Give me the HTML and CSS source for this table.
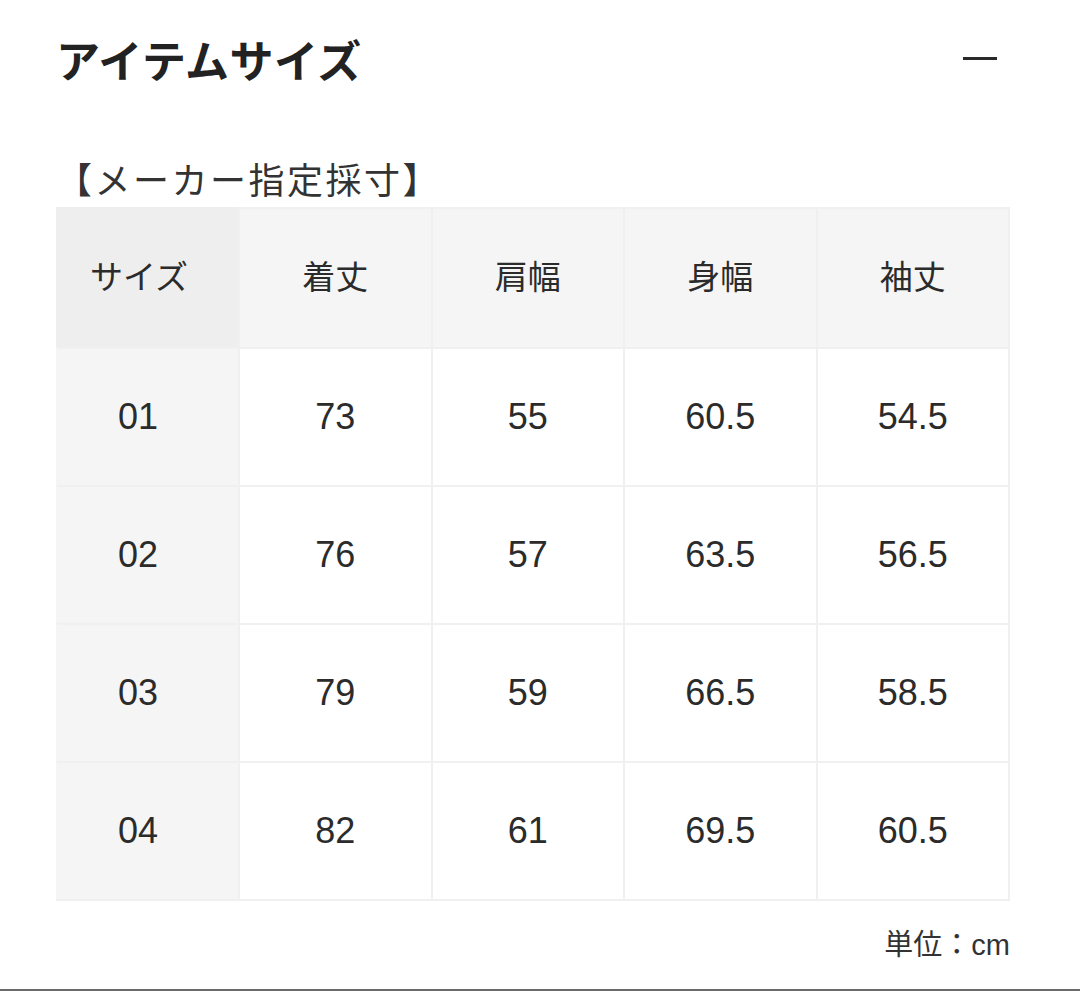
FILE: index.html
```html
<!DOCTYPE html>
<html lang="ja">
<head>
<meta charset="utf-8">
<link rel="stylesheet" href="styles.css">
</head>
<body>
<div class="page">
  <div class="header">
    <h1 class="title">アイテムサイズ</h1>
    <span class="collapse" aria-label="閉じる"></span>
  </div>
  <p class="subtitle">【メーカー指定採寸】</p>
  <div class="size-table">
    <div class="cell corner">サイズ</div>
    <div class="cell head">着丈</div>
    <div class="cell head">肩幅</div>
    <div class="cell head">身幅</div>
    <div class="cell head">袖丈</div>

    <div class="cell side">01</div>
    <div class="cell">73</div>
    <div class="cell">55</div>
    <div class="cell">60.5</div>
    <div class="cell">54.5</div>

    <div class="cell side">02</div>
    <div class="cell">76</div>
    <div class="cell">57</div>
    <div class="cell">63.5</div>
    <div class="cell">56.5</div>

    <div class="cell side">03</div>
    <div class="cell">79</div>
    <div class="cell">59</div>
    <div class="cell">66.5</div>
    <div class="cell">58.5</div>

    <div class="cell side">04</div>
    <div class="cell">82</div>
    <div class="cell">61</div>
    <div class="cell">69.5</div>
    <div class="cell">60.5</div>
  </div>
  <p class="unit">単位：cm</p>
</div>
<div class="rule"></div>
</body>
</html>
```

FILE: styles.css
```css
html, body {
  margin: 0;
  padding: 0;
  background: #ffffff;
}

body {
  font-family: "Liberation Sans", "Noto Sans CJK JP", sans-serif;
  color: #2b2b2b;
  width: 1080px;
  height: 991px;
  overflow: hidden;
  display: flex;
  flex-direction: column;
}

.page {
  flex: 1;
  padding: 32px 70px 0 56px;
}

.header {
  display: flex;
  align-items: center;
  justify-content: space-between;
  height: 54px;
}

.title {
  margin: 0;
  font-family: "Noto Sans CJK JP", sans-serif;
  font-weight: 700;
  font-size: 44px;
  line-height: 54px;
  color: #222222;
  letter-spacing: 0.5px;
}

.collapse {
  display: block;
  width: 34px;
  height: 3px;
  background: #2a2a2a;
  margin-right: 13px;
  margin-top: -2px;
}

.subtitle {
  margin: 72px 0 9px 0;
  font-family: "Noto Sans CJK JP", sans-serif;
  font-weight: 400;
  font-size: 36px;
  line-height: 40px;
  color: #333333;
  letter-spacing: 2.5px;
}

.size-table {
  display: grid;
  grid-template-columns: 182px repeat(4, 1fr);
  grid-template-rows: 140px repeat(4, 138px);
  width: 954px;
  border-right: 2px solid #f0f0f0;
  border-bottom: 2px solid #f0f0f0;
  box-sizing: border-box;
}

.cell {
  display: flex;
  align-items: center;
  justify-content: center;
  font-size: 36px;
  color: #2b2b2b;
  border-left: 2px solid #f0f0f0;
  border-top: 2px solid #f0f0f0;
  background: #ffffff;
}

.corner {
  background: #eeeeee;
  font-family: "Noto Sans CJK JP", sans-serif;
  font-size: 33px;
  border-color: #eeeeee;
  padding: 0 18px 6px 0;
}

.head {
  background: #f5f5f5;
  font-family: "Noto Sans CJK JP", sans-serif;
  font-size: 33px;
  padding-bottom: 6px;
}

.side {
  background: #f5f5f5;
  border-left-color: #f5f5f5;
  padding-right: 20px;
}

.unit {
  margin: 26px 0 0 0;
  text-align: right;
  font-family: "Liberation Sans", "Noto Sans CJK JP", sans-serif;
  font-size: 29px;
  line-height: 36px;
  color: #333333;
}

.rule {
  height: 2px;
  background: #6b6b6b;
  flex: none;
}
```
